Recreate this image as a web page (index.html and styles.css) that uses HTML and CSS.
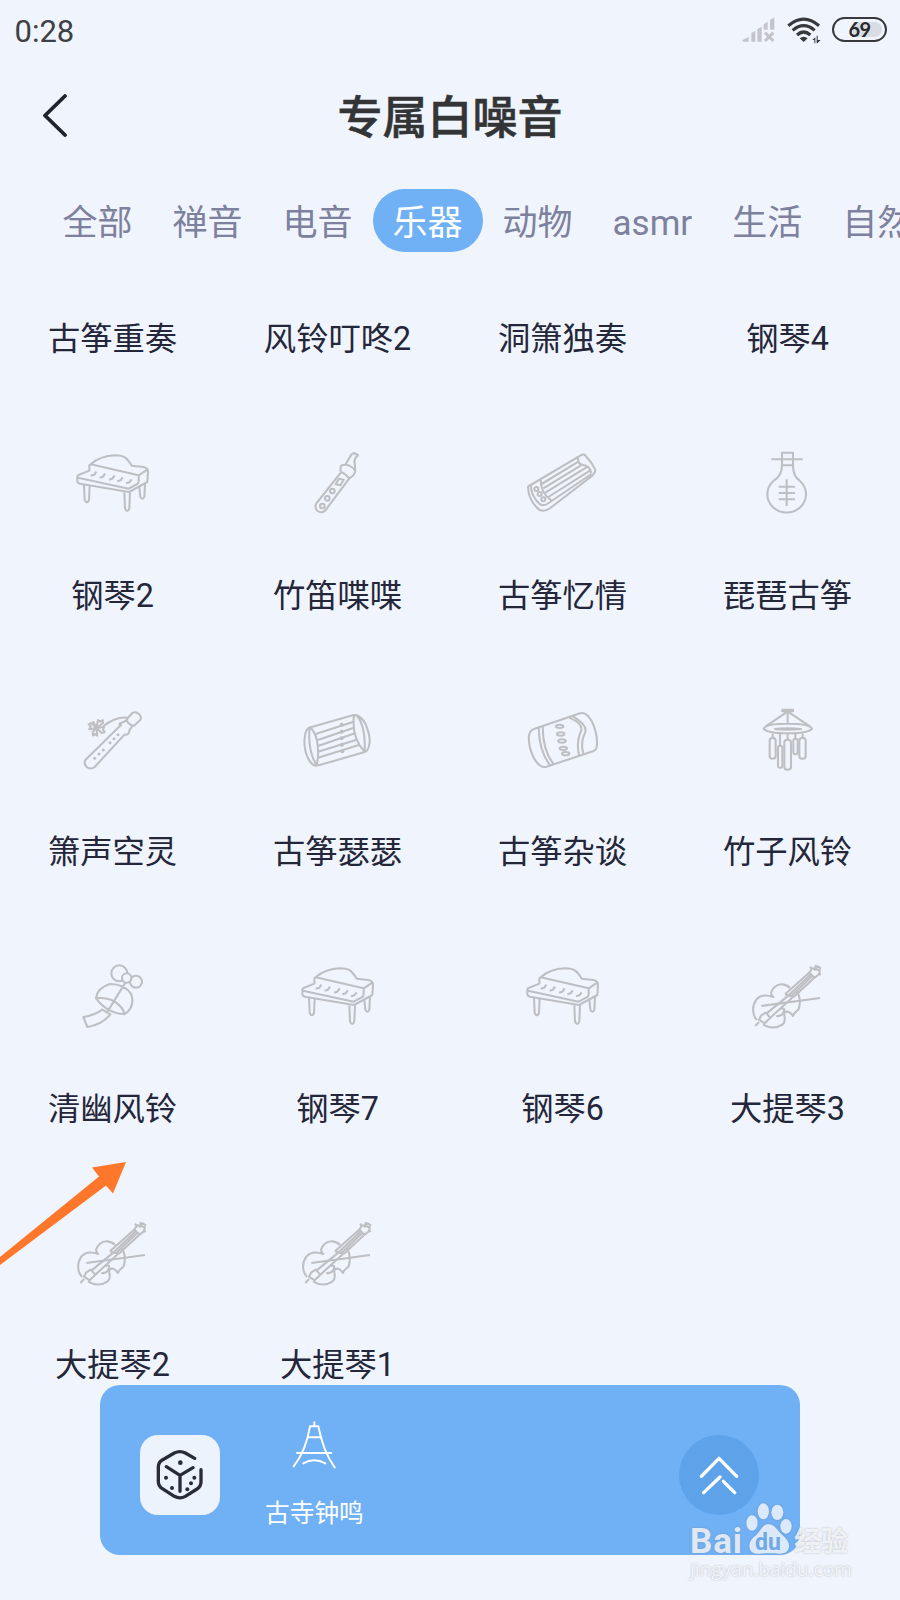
FILE: index.html
```html
<!DOCTYPE html>
<html lang="zh-CN">
<head>
<meta charset="utf-8">
<title>专属白噪音</title>
<link rel="stylesheet" href="styles.css">
</head>
<body>
<svg class="sprite" aria-hidden="true">
  <symbol id="piano" viewBox="36 36 243 243">
    <path d="M92 103C115 82 142 77 165 76C197 76 203 88 215 107L250 111Q264 114 264 124L262 156L207 186L60 161Q52 159 52 153L52 140Q52 137 56 135L88 122L88 109Q88 104 92 103L236 136L263 118M54 143L206 176L230 163Q236 160 236 152L236 136"/>
    <path d="M92 137L103 134L109 125M119 143L129 140L135 131M147 149L157 146L164 136M172 154L182 151L188 142M198 160L208 157L215 148"/>
    <path d="M72 164L74 210Q81 224 87 210L89 167M193 187L195 235Q202 251 208 235L210 187M238 171L241 200Q248 213 253 200L255 162"/>
  </symbol>
  <symbol id="flute" viewBox="711 36 243 243">
    <path d="M843 127L770 219A17 17 0 0 0 797 240L868 145M843 107Q840 118 843 127Q855 130 867 145Q882 139 886 124Q880 112 868 107Q856 101 843 107ZM857 102L874 74L882 69L894 75Q881 87 884 100L886 120"/>
    <path d="M837 146L851 149L841 166L827 163Z"/>
    <circle cx="787" cy="228" r="7"/><circle cx="802" cy="205" r="7"/><circle cx="817" cy="183" r="7"/>
  </symbol>
  <symbol id="zither" viewBox="66 36 243 243">
    <path d="M92 165L246 74Q254 71 259 80Q276 97 286 119Q286 129 278 136L151 234Q126 252 109 231Q85 205 84 171Q86 166 92 165Q94 200 119 222Q132 230 146 219L274 132M122 149Q122 189 154 211M234 84Q233 104 250 105Q270 108 274 130"/>
    <path d="M125 162L235 95M130 175L243 106M136 188L263 110M145 201L270 122"/>
    <circle cx="109" cy="177" r="6"/><circle cx="119" cy="192" r="6"/><circle cx="130" cy="208" r="6"/>
  </symbol>
  <symbol id="pipa" viewBox="741 36 243 243">
    <path d="M846 68H879V106Q879 140 899 152A58 55 0 1 1 821 152Q846 138 846 106ZM846 106H879M814 88H908M860 148V228M836 170H885M836 189H885M836 208H885"/>
  </symbol>
  <symbol id="xiao" viewBox="36 26 243 243">
    <path d="M185 102L76 209Q70 219 80 230Q92 239 104 230L194 132Q206 137 209 118L218 106M204 81Q201 94 181 98Q175 103 185 107M202 85L217 68Q226 62 237 71Q247 80 240 90L222 106Q213 106 205 98Q198 88 202 85M130 108Q164 79 204 82"/>
    <path d="M109 113L114 89L121 94L128 89L129 98L109 113L132 110L129 119L134 125L125 128L109 113L112 136L104 131L99 135L98 125L109 113L88 117L92 108L86 102L94 98L109 113L99 93"/>
    <g class="dots"><circle cx="104" cy="204" r="4.500"/><circle cx="117" cy="191" r="4.500"/><circle cx="130" cy="179" r="4.500"/><circle cx="150" cy="157" r="4.500"/><circle cx="162" cy="145" r="4.500"/><circle cx="174" cy="133" r="4.500"/></g>
  </symbol>
  <symbol id="drum" viewBox="711 26 243 243">
    <path d="M747 112L878 75Q900 70 917 102Q934 143 927 166Q924 182 914 185L776 225Q757 231 744 203Q729 172 735 135Q738 117 747 112Q756 110 768 139Q780 180 770 225M749 112Q742 180 770 225M882 74Q874 145 914 184M889 74Q917 104 914 184"/>
    <path d="M767 131L881 94M771 150L882 112M774 167L885 129M774 184L890 148M774 202L899 163"/>
    <g class="dots"><circle cx="845" cy="103" r="6"/><circle cx="845" cy="124" r="6"/><circle cx="845" cy="144" r="6"/><circle cx="846" cy="163" r="6"/><circle cx="847" cy="183" r="6"/></g>
  </symbol>
  <symbol id="barrel" viewBox="66 26 243 243">
    <path d="M104 115L240 69Q259 63 276 94Q292 126 291 162Q291 178 281 182L140 229Q119 236 100 200Q84 165 87 136Q90 118 104 115ZM116 112Q117 181 150 225M128 108Q128 180 160 221M208 82Q248 99 244 120Q228 154 237 195M219 78Q262 104 256 124Q240 155 250 190"/>
    <g><ellipse cx="179" cy="108" rx="11" ry="5"/><ellipse cx="182" cy="131" rx="11" ry="5"/><ellipse cx="186" cy="152" rx="11" ry="5"/><ellipse cx="190" cy="174" rx="11" ry="5"/><ellipse cx="197" cy="190" rx="11" ry="5"/></g>
  </symbol>
  <symbol id="chime" viewBox="741 26 243 243">
    <path d="M847 58H879V63H847ZM863 64V100M859 66L796 109M867 66L931 109M791 115Q797 100 863 100Q929 100 936 115Q922 129 863 129Q805 129 791 115ZM823 116Q863 111 903 116Q863 120 823 116M818 128V144M840 130V165M863 131V148M886 130V145M908 128V144"/>
    <rect x="809" y="143" width="18" height="62" rx="8"/><rect x="834" y="166" width="13" height="66" rx="6"/><rect x="853" y="148" width="20" height="90" rx="9"/><rect x="880" y="145" width="13" height="47" rx="6"/><rect x="898" y="143" width="19" height="62" rx="8"/>
  </symbol>
  <symbol id="bell" viewBox="36 31 243 243">
    <circle cx="178" cy="86" r="24"/><circle cx="228" cy="111" r="18"/><circle cx="200" cy="100" r="14" class="mask"/>
    <path d="M108 161Q112 129 150 118Q194 118 214 149Q226 188 193 209Q141 205 108 161Q153 155 180 184Q192 196 193 209M196 114L141 203M70 217Q102 213 127 195L151 209Q126 240 82 247Z"/>
  </symbol>
  <symbol id="violin" viewBox="741 31 243 243">
    <path d="M870 130C858 117 838 115 824 127C811 139 810 150 820 157C800 150 781 150 769 165C755 184 757 212 771 226M789 240C809 251 830 251 847 240C862 228 850 215 853 204C863 196 872 204 879 214C879 206 888 202 896 194C903 170 898 151 889 138"/>
    <path d="M855 149L930 82M881 157L943 99M855 149L881 157M866 152L931 90M874 154L936 95M865 153L799 207M878 158L811 219"/>
    <path d="M784 212L797 204L811 219L794 236L777 225ZM777 232L766 244M928 84L936 71L959 77L958 88L944 99ZM936 74L930 66M945 73L948 61M942 77L953 65L963 72M955 84L962 91M784 184L960 160M842 193Q858 188 850 204Q845 216 829 214"/>
  </symbol>
</svg>

<div class="screen">
  <div class="status">
    <span class="clock">0:28</span>
    <div class="status-icons">
      <svg class="signal" viewBox="0 0 99 75" width="33" height="25">
        <path d="M1 67L20 56V71H3ZM28 45L40 38V71H28ZM46 34L59 26V71H46ZM65 19L77 11V35H65ZM84 6L97 -2V35H84Z"/>
        <path class="cross" d="M69 44L94 69M94 44L69 69"/>
      </svg>
      <svg class="wifi" viewBox="0 0 102 80" width="34" height="26.7">
        <path d="M4 26Q50 -13 96 26M17 40Q50 12 83 40M30 54Q50 36 70 54"/>
        <path class="fill" d="M38 64Q50 54 62 64L50 75ZM76 69L85 61V79H82V69ZM89 56H92V69H101L91 79H89Z"/>
      </svg>
      <div class="battery"><span>69</span></div>
    </div>
  </div>
  <header class="header">
    <svg class="back" viewBox="0 0 26 44" width="26" height="44"><path d="M23 3L3 22.500L23 42"/></svg>
    <h1>专属白噪音</h1>
  </header>
  <nav class="tabs">
    <a>全部</a><a>禅音</a><a>电音</a><a class="active">乐器</a><a>动物</a><a>asmr</a><a>生活</a><a>自然</a>
  </nav>
  <main class="grid">
    <div class="cell"><span>古筝重奏</span></div>
    <div class="cell"><span>风铃叮咚2</span></div>
    <div class="cell"><span>洞箫独奏</span></div>
    <div class="cell"><span>钢琴4</span></div>
    <div class="cell"><svg><use href="#piano"/></svg><span>钢琴2</span></div>
    <div class="cell"><svg><use href="#flute"/></svg><span>竹笛喋喋</span></div>
    <div class="cell"><svg><use href="#zither"/></svg><span>古筝忆情</span></div>
    <div class="cell"><svg><use href="#pipa"/></svg><span>琵琶古筝</span></div>
    <div class="cell"><svg><use href="#xiao"/></svg><span>箫声空灵</span></div>
    <div class="cell"><svg><use href="#drum"/></svg><span>古筝瑟瑟</span></div>
    <div class="cell"><svg><use href="#barrel"/></svg><span>古筝杂谈</span></div>
    <div class="cell"><svg><use href="#chime"/></svg><span>竹子风铃</span></div>
    <div class="cell"><svg><use href="#bell"/></svg><span>清幽风铃</span></div>
    <div class="cell"><svg><use href="#piano"/></svg><span>钢琴7</span></div>
    <div class="cell"><svg><use href="#piano"/></svg><span>钢琴6</span></div>
    <div class="cell"><svg><use href="#violin"/></svg><span>大提琴3</span></div>
    <div class="cell"><svg><use href="#violin"/></svg><span>大提琴2</span></div>
    <div class="cell"><svg><use href="#violin"/></svg><span>大提琴1</span></div>
  </main>

  <svg class="pointer" viewBox="0 0 130 110" width="130" height="110"><path d="M126 2L92 7.500L99 16.500L0 97V105L106 25.500L113 33.500Z"/></svg>

  <div class="player">
    <div class="dice">
      <svg viewBox="0 0 150 156" width="50" height="52">
        <path class="line" d="M119 28L91 12Q75 4 58 12L22 33Q10 40 10 54V98Q10 111 22 119L58 142Q75 151 91 142L126 120Q138 112 138 99V62M34 53L75 79L114 56M75 79V127"/>
        <circle cx="76" cy="41" r="7"/><circle cx="33" cy="86" r="6"/><circle cx="51" cy="117" r="6"/><circle cx="118" cy="86" r="6"/><circle cx="108" cy="103" r="6"/><circle cx="97" cy="121" r="6"/>
      </svg>
    </div>
    <div class="track">
      <svg viewBox="0 0 132 144" width="44" height="48"><path d="M67 4V16M54 16H79M5 136Q42 89 54 16M79 16Q94 92 128 139M48 49H88M15 96H118M34 127Q66 108 100 127"/></svg>
      <span>古寺钟鸣</span>
    </div>
    <div class="expand">
      <svg viewBox="0 0 120 120" width="40" height="40"><path d="M7 64L60 10L113 64M14 113L63 66M73 79L107 113"/></svg>
    </div>
  </div>

  <div class="watermark">
    <div class="brand">
      <span class="bai">Bai</span>
      <span class="paw">
        <svg viewBox="0 0 144 156" width="48" height="52"><ellipse cx="21" cy="60" rx="17" ry="23"/><ellipse cx="55" cy="25" rx="17" ry="24"/><ellipse cx="97" cy="28" rx="18" ry="23"/><ellipse cx="123" cy="70" rx="17" ry="22"/><path d="M70 64C91 64 96 83 111 95C130 109 137 126 129 141C120 157 98 151 72 151C47 151 25 158 16 141C8 124 17 109 33 97C48 84 51 64 70 64Z"/></svg>
        <b>du</b>
      </span>
      <span class="exp">经验</span>
    </div>
    <div class="url">jingyan.baidu.com</div>
  </div>
</div>
</body>
</html>
```
FILE: styles.css
```css
* { box-sizing: border-box; }

body {
  margin: 0;
  background: #f0f4fc;
  font-family: Roboto, "Noto Sans CJK SC", sans-serif;
}

.sprite { position: absolute; width: 0; height: 0; }

.screen {
  position: relative;
  width: 900px;
  height: 1600px;
  overflow: hidden;
  background: #f0f4fc;
}

.status {
  display: flex;
  justify-content: space-between;
  height: 60px;
  padding: 0 13px 0 14.500px;
}

.clock {
  padding-top: 13.500px;
  font-size: 31px;
  line-height: 35px;
  color: #3e4043;
}

.status-icons {
  display: flex;
  align-items: flex-start;
  padding-top: 17px;
}

.signal { margin: 1px 12px 0 0; fill: #c3c5ca; overflow: visible; }
.signal .cross { stroke: #c3c5ca; stroke-width: 9; }
.wifi { margin-right: 11px; fill: none; stroke: #38393c; stroke-width: 9.500; }
.wifi .fill { fill: #38393c; stroke: none; }

.battery {
  position: relative;
  width: 55px;
  height: 25px;
  border: 2.500px solid #38393c;
  border-radius: 13px;
  color: #27282a;
  font: bold 20px/21px Lato, sans-serif;
  text-align: center;
}
.battery::before {
  content: "";
  position: absolute;
  inset: 3px;
  border-radius: 9px;
  background: linear-gradient(90deg, transparent 35%, #d9dce3 35%);
}
.battery span { position: relative; letter-spacing: -0.5px; }

.header {
  display: grid;
  grid-template-columns: 1fr auto 1fr;
  align-items: center;
  height: 112px;
  padding: 0 42px;
  border-bottom: 2px solid #f1f4f8;
}

.back { margin-top: -1px; fill: none; stroke: #20222e; stroke-width: 3.8; stroke-linecap: round; stroke-linejoin: round; }

.header h1 {
  margin: 7px 0 0;
  font-size: 45px;
  line-height: 56px;
  font-weight: 500;
  color: #333436;
  -webkit-text-stroke: 0.6px #333436;
}

.tabs {
  display: flex;
  height: 80px;
  padding: 17px 0 0 42.500px;
  white-space: nowrap;
}

.tabs a {
  flex: none;
  height: 63px;
  padding: 2px 20px 0;
  border-radius: 32px;
  font-size: 35px;
  line-height: 66px;
  color: #7d819d;
}

.tabs .active { background: #70b0f4; color: #fff; }

.grid {
  display: grid;
  grid-template-columns: repeat(4, 225px);
  row-gap: 84px;
  padding-top: 66px;
}

.cell {
  display: flex;
  flex-direction: column;
  align-items: center;
  gap: 51.600px;
  font-size: 32.300px;
  line-height: 40px;
  color: #24263a;
  white-space: nowrap;
}

.cell span { position: relative; top: 1px; }

.cell svg {
  width: 81px;
  height: 81px;
  fill: none;
  stroke: #bebfc3;
  stroke-width: 6.200;
  stroke-linejoin: round;
}

.dots { fill: #bebfc3; stroke: none; }
.mask { fill: #f0f4fc; }

.pointer { position: absolute; left: 0; top: 1160px; fill: #ff772a; }

.player {
  position: absolute;
  left: 100px;
  top: 1385px;
  display: flex;
  align-items: center;
  width: 700px;
  height: 170px;
  padding: 10px 41px 0 40px;
  border-radius: 20px;
  background: #70b0f4;
}

.dice {
  display: flex;
  align-items: center;
  justify-content: center;
  width: 80px;
  height: 80px;
  border-radius: 18px;
  background: #edf3fc;
  fill: #292b38;
}
.dice .line { fill: none; stroke: #292b38; stroke-width: 10; stroke-linecap: round; stroke-linejoin: round; }

.track {
  display: flex;
  flex-direction: column;
  align-items: center;
  gap: 30px;
  margin-left: 45px;
  color: #fff;
  font-size: 24.700px;
  line-height: 30px;
}
.track svg { fill: none; stroke: #fff; stroke-width: 6; stroke-linecap: round; }

.expand {
  display: flex;
  align-items: center;
  justify-content: center;
  width: 80px;
  height: 80px;
  margin-left: auto;
  border-radius: 50%;
  background: #5ea3ea;
}
.expand svg { fill: none; stroke: #fff; stroke-width: 10; stroke-linecap: round; stroke-linejoin: round; }

.watermark {
  position: absolute;
  left: 690px;
  top: 1503px;
  width: 170px;
  color: rgba(255, 255, 255, 0.78);
  text-shadow: 0 0 2px rgba(110, 120, 140, 0.5);
}

.brand { display: flex; align-items: flex-end; height: 53px; }
.bai { font: bold 35px/35px Roboto, sans-serif; width: 55px; margin-bottom: -3px; letter-spacing: 0.8px; }
.paw { position: relative; width: 48px; height: 53px; }
.paw svg { fill: #dce9fa; filter: drop-shadow(0 0 1px rgba(110, 120, 140, 0.4)); }
.paw b {
  position: absolute;
  left: 10px;
  bottom: 1px;
  font: bold 23px/24px Roboto, sans-serif;
  color: #70a7e6;
  text-shadow: none;
}
.exp { font: bold 27px/30px "Noto Sans CJK SC", sans-serif; margin: 0 0 1px 1px; }
.url { font: 19px/27px "Open Sans", sans-serif; white-space: nowrap; }
```
